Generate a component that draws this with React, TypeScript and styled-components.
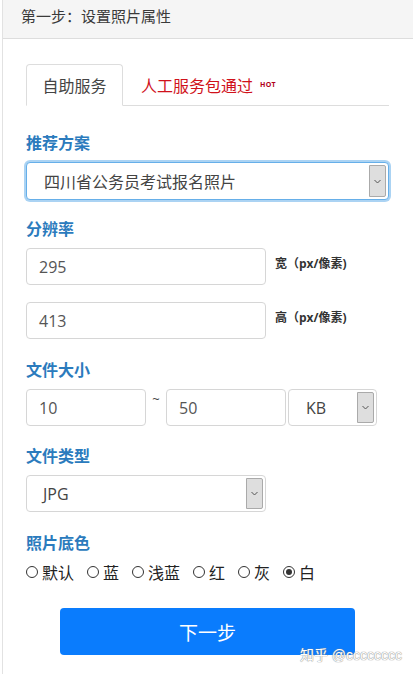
import styled, { createGlobalStyle } from 'styled-components';

const GlobalStyle = createGlobalStyle`
  html, body {
    margin: 0;
    padding: 0;
    background: #fff;
  }
  body {
    font-family: "Open Sans", "Noto Sans CJK SC", sans-serif;
    color: #333;
  }
`;

const Page = styled.div`
  position: relative;
  margin-left: 2px;
  border-left: 1px solid #e2e2e2;
  min-height: 674px;
  box-sizing: border-box;
`;

const Header = styled.div`
  height: 38px;
  line-height: 33px;
  padding-left: 18px;
  background: #f5f5f5;
  border-bottom: 1px solid #ddd;
  font-size: 15px;
  color: #3a3a3a;
`;

const Content = styled.div`
  padding: 25px 24px 0 23px;
`;

const Tabs = styled.div`
  display: flex;
  align-items: stretch;
  height: 41px;
  border-bottom: 1px solid #ddd;
`;

const Tab = styled.div<{ active?: boolean }>`
  display: flex;
  align-items: center;
  font-size: 16px;
  ${({ active }) =>
    active
      ? `
    width: 97px;
    justify-content: center;
    box-sizing: border-box;
    border: 1px solid #ddd;
    border-bottom-color: #fff;
    border-radius: 4px 4px 0 0;
    margin-bottom: -1px;
    color: #444;
    background: #fff;
  `
      : `
    padding-left: 18px;
    color: #d0121b;
  `}
`;

const Hot = styled.span`
  font-size: 7px;
  font-weight: 700;
  color: #b0001a;
  margin-left: 7px;
  letter-spacing: 0.3px;
`;

const Label = styled.div<{ top: number }>`
  margin-top: ${({ top }) => top}px;
  margin-bottom: 9px;
  line-height: 20px;
  font-size: 16px;
  font-weight: 700;
  color: #2b7bbd;
`;

const SelectBox = styled.div<{ width?: number; focus?: boolean; pad?: number }>`
  display: flex;
  align-items: stretch;
  box-sizing: border-box;
  width: ${({ width }) => (width ? `${width}px` : '100%')};
  height: ${({ focus }) => (focus ? 38 : 37)}px;
  border: 1px solid ${({ focus }) => (focus ? '#66afe9' : '#d6d6d6')};
  border-radius: 4px;
  box-shadow: ${({ focus }) => (focus ? '0 0 0 2px rgba(102, 175, 233, 0.55)' : 'none')};
  background: #fff;
  padding: 2px;
  .value {
    flex: 1;
    display: flex;
    align-items: center;
    padding-left: ${({ pad }) => pad ?? 14}px;
    font-size: 16px;
    color: #444;
  }
`;

const Arrow = styled.div`
  width: 15px;
  display: flex;
  align-items: center;
  justify-content: center;
  background: #dedede;
  border: 1px solid #aaa;
  border-radius: 0 2px 2px 0;
`;

const Input = styled.div<{ width: number; pad?: number }>`
  display: flex;
  align-items: center;
  box-sizing: border-box;
  width: ${({ width }) => width}px;
  height: 37px;
  padding-left: ${({ pad }) => pad ?? 12}px;
  border: 1px solid #d6d6d6;
  border-radius: 4px;
  font-size: 16px;
  color: #555;
  background: #fff;
`;

const Row = styled.div<{ gap?: number }>`
  display: flex;
  align-items: flex-start;
  gap: ${({ gap }) => gap ?? 0}px;
  & + & {
    margin-top: 17px;
  }
`;

const Unit = styled.div`
  padding-top: 6px;
  font-size: 12px;
  font-weight: 700;
  color: #333;
`;

const Tilde = styled.div`
  width: 20px;
  text-align: center;
  font-size: 13px;
  line-height: 20px;
  color: #444;
`;

const Radios = styled.div`
  display: flex;
  align-items: center;
  gap: 13px;
  margin-top: 9px;
  height: 20px;
`;

const RadioItem = styled.label`
  display: flex;
  align-items: center;
  gap: 4px;
  font-size: 16px;
  color: #222;
`;

const Circle = styled.span<{ checked?: boolean }>`
  position: relative;
  width: 12px;
  height: 12px;
  box-sizing: border-box;
  border: 1px solid #333;
  border-radius: 50%;
  &::after {
    content: '';
    display: ${({ checked }) => (checked ? 'block' : 'none')};
    position: absolute;
    left: 2px;
    top: 2px;
    width: 6px;
    height: 6px;
    border-radius: 50%;
    background: #333;
  }
`;

const Button = styled.button`
  display: block;
  margin: 26px auto 0;
  width: 295px;
  height: 47px;
  border: none;
  border-radius: 4px;
  background: #0a7cfd;
  color: #fff;
  font-size: 19px;
  font-family: "Open Sans", "Noto Sans CJK SC", sans-serif;
  padding: 0;
`;

const Watermark = styled.div`
  position: absolute;
  right: 11px;
  top: 644px;
  font-size: 14px;
  color: #fff;
  text-shadow: 0 0 1px #888, 0 0 1px #888;
  font-family: "Liberation Sans", "Noto Sans CJK SC", sans-serif;
`;

const Chevron = () => (
  <svg width="7" height="5" viewBox="0 0 7 5">
    <polyline points="0.5,1 3.5,4 6.5,1" fill="none" stroke="#555" strokeWidth="1" />
  </svg>
);

const Select = ({ value, width, focus, pad }: { value: string; width?: number; focus?: boolean; pad?: number }) => (
  <SelectBox width={width} focus={focus} pad={pad}>
    <div className="value">{value}</div>
    <Arrow>
      <Chevron />
    </Arrow>
  </SelectBox>
);

const colors = ['默认', '蓝', '浅蓝', '红', '灰', '白'];

export default function App() {
  return (
    <>
      <GlobalStyle />
      <Page>
        <Header>第一步：设置照片属性</Header>
        <Content>
          <Tabs>
            <Tab active>自助服务</Tab>
            <Tab>
              人工服务包通过<Hot>HOT</Hot>
            </Tab>
          </Tabs>

          <Label top={27}>推荐方案</Label>
          <Select value="四川省公务员考试报名照片" focus pad={15} />

          <Label top={19}>分辨率</Label>
          <Row gap={9}>
            <Input width={240}>295</Input>
            <Unit>宽（px/像素)</Unit>
          </Row>
          <Row gap={9}>
            <Input width={240}>413</Input>
            <Unit>高（px/像素)</Unit>
          </Row>

          <Label top={21}>文件大小</Label>
          <Row>
            <Input width={120}>10</Input>
            <Tilde>~</Tilde>
            <Input width={120}>50</Input>
            <SelectBox width={89} pad={15} style={{ marginLeft: 2 }}>
              <div className="value">KB</div>
              <Arrow>
                <Chevron />
              </Arrow>
            </SelectBox>
          </Row>

          <Label top={20}>文件类型</Label>
          <Select value="JPG" width={240} pad={14} />

          <Label top={21} style={{ marginBottom: 0 }}>照片底色</Label>
          <Radios>
            {colors.map((c) => (
              <RadioItem key={c}>
                <Circle checked={c === '白'} />
                {c}
              </RadioItem>
            ))}
          </Radios>

          <Button>下一步</Button>
        </Content>
        <Watermark>知乎 @cccccccc</Watermark>
      </Page>
    </>
  );
}
